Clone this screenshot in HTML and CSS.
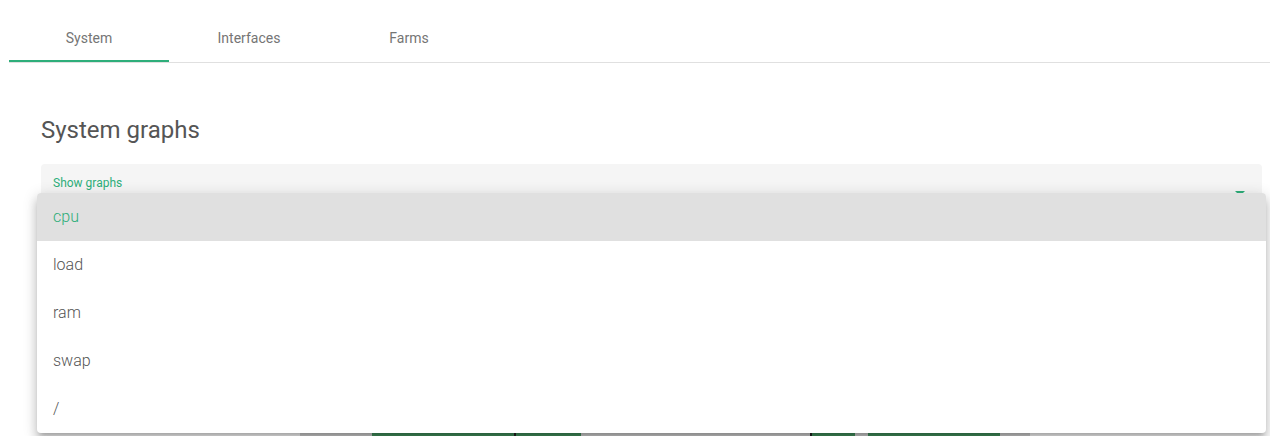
FILE: index.html
```html
<!DOCTYPE html>
<html lang="en">
<head>
    <meta charset="utf-8">
    <title>Monitoring - System</title>
    <link rel="stylesheet" href="styles.css">
</head>
<body>
<nav class="tab-bar">
    <div class="tab -active">System</div>
    <div class="tab">Interfaces</div>
    <div class="tab">Farms</div>
</nav>
<main class="content">
    <h2 class="title">System graphs</h2>
    <div class="select-field">
        <span class="select-label">Show graphs</span>
        <span class="select-arrow"></span>
    </div>
    <div class="graph-preview">
        <div class="bar -grey" style="width:72px"></div>
        <div class="bar -green" style="width:142px"></div>
        <div class="bar -dark" style="width:2px"></div>
        <div class="bar -green" style="width:65px"></div>
        <div class="bar -grey" style="width:229px"></div>
        <div class="bar -dark" style="width:2px"></div>
        <div class="bar -green" style="width:43px"></div>
        <div class="bar -grey" style="width:13px"></div>
        <div class="bar -green" style="width:132px"></div>
        <div class="bar -grey" style="width:30px"></div>
    </div>
</main>
<div class="select-panel">
    <div class="option -selected">cpu</div>
    <div class="option">load</div>
    <div class="option">ram</div>
    <div class="option">swap</div>
    <div class="option">/</div>
</div>
</body>
</html>
```

FILE: styles.css
```css
* {
    box-sizing: border-box;
    margin: 0;
    padding: 0;
}
html, body {
    width: 100%;
    height: 100%;
    overflow: hidden;
}
body {
    font-family: Roboto, "Liberation Sans", sans-serif;
    color: rgba(0, 0, 0, .87);
    background: #fff;
}
.tab-bar {
    display: flex;
    margin-left: 9px;
    height: 63px;
    border-bottom: 1px solid #e0e0e0;
}
.tab {
    position: relative;
    width: 160px;
    display: flex;
    align-items: center;
    justify-content: center;
    padding-top: 14px;
    font-size: 14px;
    color: #757575;
}
.tab.-active::after {
    content: "";
    position: absolute;
    left: 0;
    right: 0;
    bottom: 0;
    height: 2px;
    background: #2eae7a;
}
.content {
    padding: 0 8px 0 41px;
}
.title {
    margin-top: 51px;
    font-size: 24px;
    line-height: 32px;
    font-weight: 400;
    color: #555;
}
.select-field {
    position: relative;
    margin-top: 18px;
    height: 56px;
    background: #f5f5f5;
    border-radius: 4px 4px 0 0;
    padding: 8px 12px 0;
}
.select-label {
    font-size: 12px;
    line-height: 14px;
    color: #2eae7a;
}
.select-arrow {
    position: absolute;
    right: 17px;
    top: 27px;
    width: 0;
    height: 0;
    border-left: 5px solid transparent;
    border-right: 5px solid transparent;
    border-top: 5px solid #2eae7a;
}
.graph-preview {
    display: flex;
    margin: 212px 0 0 259px;
    width: 730px;
    height: 10px;
}
.bar {
    height: 10px;
}
.bar.-grey {
    background: #d6d6d6;
}
.bar.-green {
    background: #43955f;
}
.bar.-dark {
    background: #222;
}
.select-panel {
    position: absolute;
    left: 37px;
    top: 193px;
    width: 1229px;
    background: #fff;
    border-radius: 4px;
    overflow: hidden;
    box-shadow: 0 5px 5px -3px rgba(0, 0, 0, .2), 0 8px 10px 1px rgba(0, 0, 0, .14), 0 3px 14px 2px rgba(0, 0, 0, .12);
}
.option {
    height: 48px;
    display: flex;
    align-items: center;
    padding: 0 16px 2px;
    font-size: 16px;
    font-weight: 300;
    color: #555;
}
.option.-selected {
    background: #e0e0e0;
    color: #2eae7a;
}
```
